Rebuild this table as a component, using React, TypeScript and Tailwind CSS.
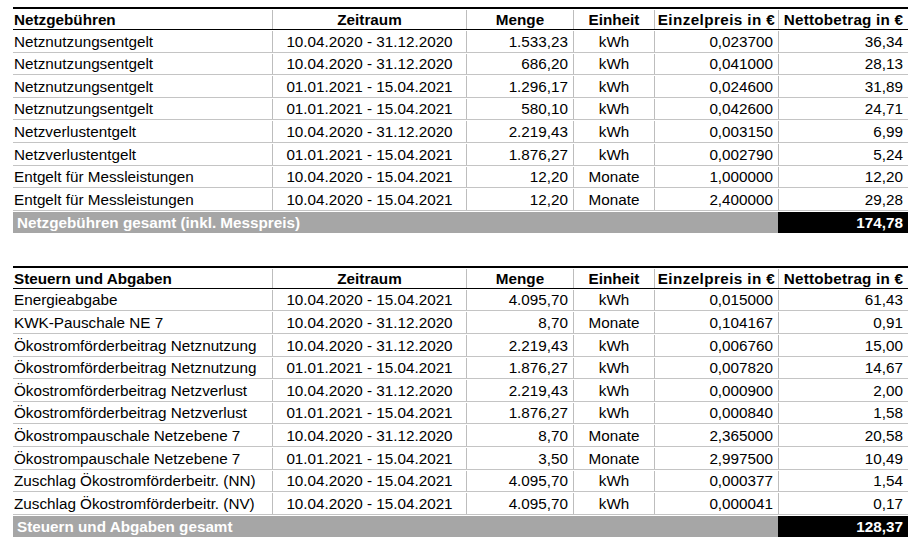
import React from "react";

type Row = [string, string, string, string, string, string];

const netz: Row[] = [
  ["Netznutzungsentgelt", "10.04.2020 - 31.12.2020", "1.533,23", "kWh", "0,023700", "36,34"],
  ["Netznutzungsentgelt", "10.04.2020 - 31.12.2020", "686,20", "kWh", "0,041000", "28,13"],
  ["Netznutzungsentgelt", "01.01.2021 - 15.04.2021", "1.296,17", "kWh", "0,024600", "31,89"],
  ["Netznutzungsentgelt", "01.01.2021 - 15.04.2021", "580,10", "kWh", "0,042600", "24,71"],
  ["Netzverlustentgelt", "10.04.2020 - 31.12.2020", "2.219,43", "kWh", "0,003150", "6,99"],
  ["Netzverlustentgelt", "01.01.2021 - 15.04.2021", "1.876,27", "kWh", "0,002790", "5,24"],
  ["Entgelt für Messleistungen", "10.04.2020 - 15.04.2021", "12,20", "Monate", "1,000000", "12,20"],
  ["Entgelt für Messleistungen", "10.04.2020 - 15.04.2021", "12,20", "Monate", "2,400000", "29,28"],
];

const steuern: Row[] = [
  ["Energieabgabe", "10.04.2020 - 15.04.2021", "4.095,70", "kWh", "0,015000", "61,43"],
  ["KWK-Pauschale NE 7", "10.04.2020 - 31.12.2020", "8,70", "Monate", "0,104167", "0,91"],
  ["Ökostromförderbeitrag Netznutzung", "10.04.2020 - 31.12.2020", "2.219,43", "kWh", "0,006760", "15,00"],
  ["Ökostromförderbeitrag Netznutzung", "01.01.2021 - 15.04.2021", "1.876,27", "kWh", "0,007820", "14,67"],
  ["Ökostromförderbeitrag Netzverlust", "10.04.2020 - 31.12.2020", "2.219,43", "kWh", "0,000900", "2,00"],
  ["Ökostromförderbeitrag Netzverlust", "01.01.2021 - 15.04.2021", "1.876,27", "kWh", "0,000840", "1,58"],
  ["Ökostrompauschale Netzebene 7", "10.04.2020 - 31.12.2020", "8,70", "Monate", "2,365000", "20,58"],
  ["Ökostrompauschale Netzebene 7", "01.01.2021 - 15.04.2021", "3,50", "Monate", "2,997500", "10,49"],
  ["Zuschlag Ökostromförderbeitr. (NN)", "10.04.2020 - 15.04.2021", "4.095,70", "kWh", "0,000377", "1,54"],
  ["Zuschlag Ökostromförderbeitr. (NV)", "10.04.2020 - 15.04.2021", "4.095,70", "kWh", "0,000041", "0,17"],
];

const cols = "grid grid-cols-[259px_194px_107px_81px_124px_130px]";

function Table({ title, rows, total, totalLabel }: { title: string; rows: Row[]; total: string; totalLabel: string }) {
  return (
    <div className="w-[895px]">
      <div className={`${cols} h-[23px] border-t-2 border-b border-black pt-[1px] font-bold`}>
        <div className="flex items-center pl-[1px]">{title}</div>
        <div className="flex items-center justify-center border-l border-[#bdbdbd]">Zeitraum</div>
        <div className="flex items-center justify-center border-l border-[#bdbdbd]">Menge</div>
        <div className="flex items-center justify-center border-l border-[#bdbdbd]">Einheit</div>
        <div className="flex items-center justify-center border-l border-[#bdbdbd] tracking-[0.4px]">Einzelpreis in €</div>
        <div className="flex items-center justify-center border-l border-[#bdbdbd] tracking-[0.2px]">Nettobetrag in €</div>
      </div>
      {rows.map((r, i) => (
        <div key={i} className={`${cols} h-[22.6px] border-b border-[#c4c4c4] pt-[1px]`}>
          <div className="flex items-center pl-[1px] whitespace-nowrap">{r[0]}</div>
          <div className="flex items-center justify-center border-l border-[#bdbdbd]">{r[1]}</div>
          <div className="flex items-center justify-end border-l border-[#bdbdbd] pr-[5px]">{r[2]}</div>
          <div className="flex items-center justify-center border-l border-[#bdbdbd]">{r[3]}</div>
          <div className="flex items-center justify-end border-l border-[#bdbdbd] pr-[5px]">{r[4]}</div>
          <div className="flex items-center justify-end border-l border-[#bdbdbd] pr-[5px]">{r[5]}</div>
        </div>
      ))}
      <div className="flex h-[22px] pt-[1px] font-bold text-white">
        <div className="flex w-[765px] items-center bg-[#a6a6a6] pl-[4px]">{totalLabel}</div>
        <div className="flex flex-1 items-center justify-end bg-black pr-[5px]">{total}</div>
      </div>
    </div>
  );
}

export default function App() {
  return (
    <div className="h-[545px] w-[917px] overflow-hidden bg-white pl-[13px] pt-[7px] font-['Liberation_Sans',Arial,sans-serif] text-[15.25px] leading-none text-black">
      <Table title="Netzgebühren" rows={netz} total="174,78" totalLabel="Netzgebühren gesamt (inkl. Messpreis)" />
      <div className="h-[33px]" />
      <Table title="Steuern und Abgaben" rows={steuern} total="128,37" totalLabel="Steuern und Abgaben gesamt" />
    </div>
  );
}
